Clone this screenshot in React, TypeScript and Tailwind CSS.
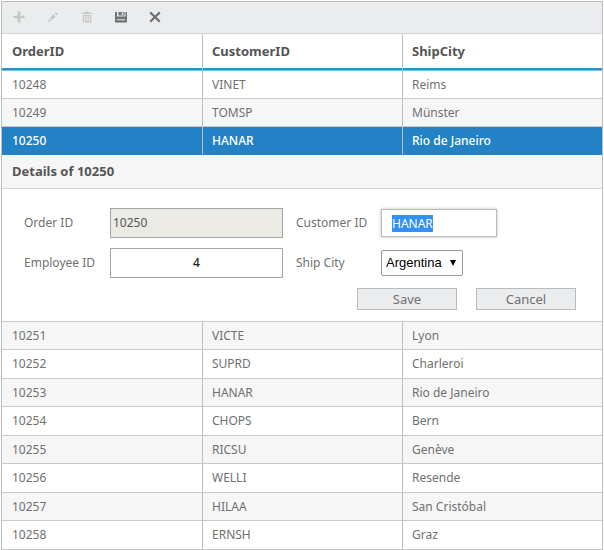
import { Fragment, useEffect, useRef } from "react";
import type { FormEvent, ReactNode } from "react";

type Order = { id: number; customer: string; city: string };

const orders: Order[] = [
  { id: 10248, customer: "VINET", city: "Reims" },
  { id: 10249, customer: "TOMSP", city: "Münster" },
  { id: 10250, customer: "HANAR", city: "Rio de Janeiro" },
  { id: 10251, customer: "VICTE", city: "Lyon" },
  { id: 10252, customer: "SUPRD", city: "Charleroi" },
  { id: 10253, customer: "HANAR", city: "Rio de Janeiro" },
  { id: 10254, customer: "CHOPS", city: "Bern" },
  { id: 10255, customer: "RICSU", city: "Genève" },
  { id: 10256, customer: "WELLI", city: "Resende" },
  { id: 10257, customer: "HILAA", city: "San Cristóbal" },
  { id: 10258, customer: "ERNSH", city: "Graz" },
];

const editedId = 10250;

function rowTone(index: number, selected: boolean) {
  if (selected) return "h-7 bg-[#2382c5] font-medium text-white";
  if (index === 0) return "h-7 bg-white";
  return index % 2 === 1 ? "h-7 bg-[#f6f6f7]" : "h-[29px] bg-white";
}

function ToolButton({ label, disabled, children }: { label: string; disabled?: boolean; children: ReactNode }) {
  return (
    <button
      type="button"
      aria-label={label}
      disabled={disabled}
      className="flex size-[18px] items-center justify-center text-[#707172] disabled:text-[#c6c7c8]"
    >
      <svg viewBox="0 0 14 14" className="size-[14px]" fill="currentColor" aria-hidden="true">
        {children}
      </svg>
    </button>
  );
}

function Toolbar() {
  return (
    <div role="toolbar" className="flex h-8 items-center gap-4 border-b border-[#d4d4d4] bg-[#ebeced] pb-px pl-2">
      <ToolButton label="Add" disabled>
        <path d="M5.700 1.500h2.600v4.200h4.200v2.600H8.300v4.200H5.700V8.300H1.500V5.700h4.200z" />
      </ToolButton>
      <ToolButton label="Edit" disabled>
        <path d="M2 12l1-3.200L5.200 11zM3.800 8l3.500-3.500 2.300 2.300L6 10.300zM8.600 3.300l.9-.9h1l1.200 1.200v1l-.9.9z" />
      </ToolButton>
      <ToolButton label="Delete" disabled>
        <path
          d="M5 1.500h4v1.300h3.200V4H1.800V2.800H5zM2.800 5h8.400v7.500H2.800zm1.300 1v5.400h1.200V6zm2.300 0v5.400h1.200V6zm2.300 0v5.400h1.200V6z"
          fillRule="evenodd"
        />
      </ToolButton>
      <ToolButton label="Save">
        <path d="M1 2h2v4.500h8.500V2H13v10.500H1zM4.500 2h6v3.600h-6zM7.700 2.500v2.300h1.600V2.500zM2.800 9.300v1h8.400v-1z" fillRule="evenodd" />
      </ToolButton>
      <ToolButton label="Cancel">
        <path d="M2.200 2.400L11.800 11.800M11.800 2.400L2.200 11.800" fill="none" stroke="currentColor" strokeWidth="2.200" />
      </ToolButton>
    </div>
  );
}

function EditForm({ order }: { order: Order }) {
  const customerRef = useRef<HTMLInputElement>(null);
  useEffect(() => {
    customerRef.current?.focus();
    customerRef.current?.select();
  }, []);

  return (
    <form onSubmit={(e: FormEvent) => e.preventDefault()}>
      <h2 className="flex h-[33px] items-center bg-[#f6f6f7] pl-[10px] text-[13px] font-bold text-[#555]">
        Details of {order.id}
      </h2>
      <div className="grid grid-cols-[73px_173px_72px_116px] items-center gap-x-[13px] gap-y-[10px] border-t border-[#d4d4d4] pt-[19px] pl-[22px] whitespace-nowrap">
        <label htmlFor="orderId">Order ID</label>
        <input
          id="orderId"
          readOnly
          defaultValue={order.id}
          className="h-[30px] w-full border border-[#a5a5a5] bg-[#ebeae5] px-[2px] pb-[2px] text-[#555]"
        />
        <label htmlFor="customerId">Customer ID</label>
        <input
          id="customerId"
          ref={customerRef}
          defaultValue={order.customer}
          className="h-7 w-full border border-[#bbb] bg-white px-[10px] shadow-[0_0_3px_#bbb] outline-none selection:bg-[#3390f5] selection:text-white"
        />
        <label htmlFor="employeeId">Employee ID</label>
        <input
          id="employeeId"
          defaultValue="4"
          className="h-[30px] w-full border border-[#a5a5a5] bg-white pb-[2px] text-center font-medium text-[#222]"
        />
        <label htmlFor="shipCity">Ship City</label>
        <div className="relative w-[82px]">
          <select
            id="shipCity"
            className="block h-[26px] w-full appearance-none rounded-[2px] border border-[#999] bg-white pl-1 font-['Liberation_Sans',Arial,sans-serif] text-[13px] text-black"
          >
            <option>Argentina</option>
          </select>
          <svg
            viewBox="0 0 6 6"
            aria-hidden="true"
            className="pointer-events-none absolute top-[10px] right-[7px] size-[6px]"
          >
            <path d="M0 0h6L3 6z" />
          </svg>
        </div>
      </div>
      <div className="flex justify-end gap-[19px] pt-[10px] pr-[26px] pb-[11px]">
        <button type="submit" className="h-[22px] w-[100px] border border-[#b9babb] bg-[#ebeced] text-[13px] leading-5">
          Save
        </button>
        <button type="button" className="h-[22px] w-[100px] border border-[#b9babb] bg-[#ebeced] text-[13px] leading-5">
          Cancel
        </button>
      </div>
    </form>
  );
}

export default function App() {
  return (
    <main className="bg-white p-px font-['Noto_Sans','Open_Sans',sans-serif] text-[12px] text-[#707070]">
      <div className="border border-[#bcbdbe]">
        <Toolbar />
        <table className="w-full table-fixed border-separate border-spacing-0 text-left">
          <thead>
            <tr className="h-[37px] text-[13px] text-[#555]">
              {["OrderID", "CustomerID", "ShipCity"].map((name) => (
                <th
                  key={name}
                  scope="col"
                  className="border-b border-l border-b-[#6fc3e8] border-l-[#bcbdbe] py-0 pl-[9px] font-bold shadow-[inset_0_-2px_0_#2b8fcc] first:border-l-0 first:pl-[10px]"
                >
                  {name}
                </th>
              ))}
            </tr>
          </thead>
          <tbody>
            {orders.map((order, index) => {
              const selected = order.id === editedId;
              return (
                <Fragment key={order.id}>
                  <tr className={rowTone(index, selected)}>
                    {[order.id, order.customer, order.city].map((value, column) => (
                      <td
                        key={column}
                        className={`border-b border-l border-l-[#bcbdbe] py-0 pl-[9px] leading-5 first:border-l-0 first:pl-[10px] ${
                          selected ? "border-b-[#2382c5]" : "border-b-[#c8c9ca]"
                        }`}
                      >
                        {value}
                      </td>
                    ))}
                  </tr>
                  {selected && (
                    <tr>
                      <td colSpan={3} className="border-b border-[#c8c9ca] p-0">
                        <EditForm order={order} />
                      </td>
                    </tr>
                  )}
                </Fragment>
              );
            })}
          </tbody>
        </table>
      </div>
    </main>
  );
}
